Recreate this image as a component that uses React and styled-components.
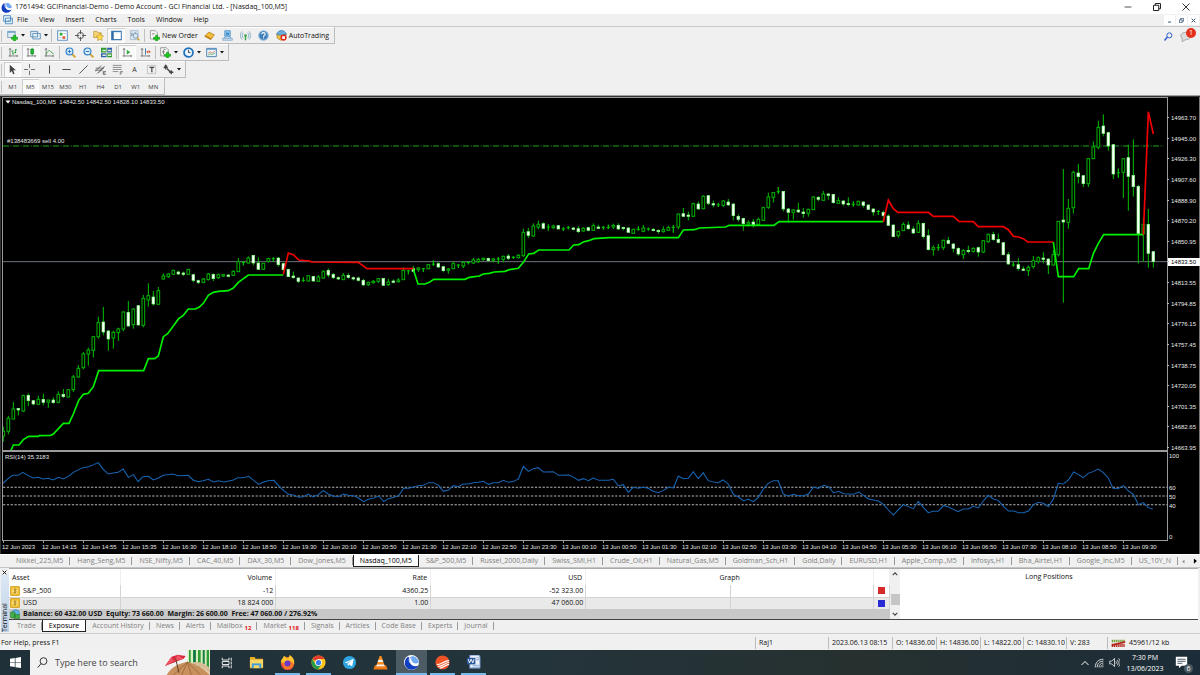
import React, { useState } from 'react';
import styled, { createGlobalStyle, css } from 'styled-components';

const GlobalStyle = createGlobalStyle`
  * {
    box-sizing: border-box;
  }
  body {
    margin: 0;
    background: #f0f0f0;
    font-family: 'Open Sans', 'Noto Sans', sans-serif;
    font-size: 7px;
    line-height: 10px;
    color: #111;
  }
  button, input {
    margin: 0;
    padding: 0;
    border: 0;
    background: none;
    color: inherit;
    font: inherit;
  }
  svg {
    display: block;
  }
`;

// every candle is "high top bottom low kind": g = up, w = down, d = flat
const parseCandles = (text, base) =>
  text.split(',').map(item => {
    const [high, top, bottom, low, kind] = item.trim().split(' ');
    return { high: +high + base, top: +top + base, bottom: +bottom + base, low: +low + base, kind };
  });

const candles = [
  ...parseCandles(
    `1010 1024 1038 1055 g,978 985 1024 1033 g,936 957 987 987 g,954 955 960 976 w,914 917 963 966 g,910 916 932 948 w,
    930 932 942 946 w,917 928 943 943 g,911 928 937 946 w,930 930 936 953 g,922 930 938 941 w,904 913 937 940 g,
    897 913 920 924 w,897 899 921 922 g,855 861 899 906 g,825 835 861 863 g,786 792 833 838 g,773 780 792 827 g,
    738 740 781 803 g,680 698 740 746 g,651 696 726 736 w,720 723 747 782 w,722 727 744 776 g,713 717 728 753 g,
    664 666 717 724 g,633 667 708 710 w,655 657 704 716 g,645 647 705 706 w,615 625 706 712 g,580 617 630 650 g,
    603 621 642 647 w,591 602 643 644 g,550 558 567 569 g,550 552 560 564 g,539 541 553 555 g,542 546 552 555 w,
    545 549 552 558 w,537 538 553 555 g,552 554 571 577 w,569 572 577 582 w,564 567 577 580 g,549 552 569 571 g,
    550 553 566 573 w,551 554 563 567 g,552 554 558 561 g,553 555 559 562 w,541 544 556 558 g,504 515 545 546 g,
    514 516 519 526 d,499 504 519 521 g,495 496 519 526 w,502 519 538 540 w,519 520 538 540 g,503 506 514 518 g,
    502 505 507 515 d,502 504 524 530 w,518 521 539 545 w,536 538 560 561 w,545 558 563 566 w,562 564 574 579 w,
    562 570 572 576 d,555 557 573 574 g,558 559 573 575 w,555 561 574 576 g,540 545 564 566 g,535 541 555 562 w,
    549 553 563 567 w,559 563 566 570 w,549 556 569 570 g,550 556 562 566 w,560 563 566 571 w,560 564 571 574 w,
    567 571 585 586 w,575 577 584 588 g,570 574 578 581 g,564 566 574 579 g,564 565 586 588 w,566 576 584 588 g,
    568 573 577 580 w,564 570 575 578 g`,
    0
  ),
  ...parseCandles(
    `262 271 299 300 g,270 271 274 283 d,258 266 274 278 w,261 264 269 276 g,264 265 267 276 d,252 254 266 268 g,
    241 251 254 258 d,247 251 261 264 w,258 260 272 277 w,264 267 270 281 g,245 251 266 268 g,252 254 257 264 d,
    243 247 258 264 g,243 246 249 253 d,234 240 249 252 g,234 238 245 249 g,233 235 239 242 g,233 235 242 245 w,
    234 237 241 247 g,231 236 238 251 d,227 229 238 247 g,222 228 235 240 w,228 231 233 237 d,222 226 233 235 g,
    146 157 227 231 g,144 155 166 174 w,130 138 168 170 g,122 133 141 148 g,127 131 145 148 w,133 140 142 152 d,
    134 138 143 147 g,135 137 147 148 w,142 145 148 153 d,138 142 144 148 d,141 144 148 151 w,138 146 155 159 w,
    141 145 153 155 g,140 143 151 154 w,130 137 151 152 g,134 141 143 147 w,138 141 143 149 d,134 141 143 147 d,
    131 136 141 147 g,130 136 147 149 w,140 142 146 151 w,142 144 157 158 w,146 148 160 162 g,139 147 149 152 d,
    135 144 154 157 g,143 146 148 152 d,144 148 152 154 w,148 151 155 161 w,139 149 155 158 g,137 143 151 152 g,
    135 141 143 158 d,101 102 141 148 g,84 101 109 111 w,95 105 108 121 w,68 71 109 110 g,64 72 87 89 w,
    46 49 86 88 g,45 47 70 75 w,62 71 74 82 w,69 73 76 81 d,61 63 76 81 g,57 66 75 76 w,70 72 107 121 w,
    103 109 118 125 w,113 115 131 152 w,121 127 132 140 g,117 126 134 142 w,113 118 133 137 g,80 83 121 122 g,
    38 51 82 87 g,36 38 52 68 g,21 34 36 41 d,33 34 87 94 w,84 87 97 128 w,87 90 97 119 g,68 90 96 98 w`,
    270
  ),
  ...parseCandles(
    `354 366 371 383 w,356 358 370 380 g,319 321 359 360 g,318 322 328 334 w,303 312 331 333 g,309 312 316 329 w,
    312 313 338 341 w,322 332 340 342 g,330 333 342 347 w,322 340 343 349 w,334 342 344 350 d,332 334 345 346 g,
    333 336 346 353 w,343 345 358 360 w,355 357 366 377 w,360 362 367 375 d,362 367 377 393 w,372 378 406 408 w,
    404 405 440 442 w,422 424 437 443 g,397 403 422 423 g,394 405 416 420 w,409 417 429 432 w,391 401 427 429 g,
    398 400 440 446 w,418 437 479 481 w,466 473 479 497 g,462 472 474 482 d,449 451 473 480 g,441 451 460 463 w,
    460 462 475 487 w,472 475 492 497 w,477 482 494 507 g,467 481 485 490 w,472 475 484 488 g,470 473 486 500 w,
    450 452 486 489 g,431 433 455 458 g,425 433 449 452 w,431 448 457 460 w,456 458 494 496 w,486 494 522 524 w,
    516 523 527 530 d,504 524 536 542 w,529 537 540 543 w,526 532 542 558 g,498 512 530 536 g,499 503 514 521 g,
    487 504 508 520 w,505 507 525 552 w,480 494 525 527 g,393 394 494 500 g,237 390 396 638 w,327 355 397 416 g,
    242 247 353 371 g,222 249 260 280 w,255 257 281 291 w,204 206 281 291 g,154 171 206 207 g,92 112 172 178 g,
    73 108 130 139 w,125 128 168 182 w,162 164 252 267 w,236 246 251 263 d,205 206 247 324 g,164 203 259 362 w,
    148 256 290 320 w,285 289 431 521 w,385 403 431 515 g,357 403 490 533 w,483 485 515 533 w`,
    0
  )
];

const trendLines = [
  ['#00f000', '33,1081 40,1065 57,1065 70,1049 86,1039 115,1039 118,1037 152,1036 160,1032 190,1000 207,1000 220,972 236,931 250,913 265,910 280,890 296,842 431,842 445,806 464,806 475,798 490,740 503,731 536,686 549,677 565,657 586,657 597,652 610,640 625,616 640,607 655,604 685,602 700,594 715,577 745,555 850,555'],
  ['#f00000', '850,553 865,489 880,494 896,510 930,513 935,516 1075,517 1101,536 1240,536'],
  ['#00f000', '1240,538 1254,582 1275,582 1288,577 1301,568 1395,568 1408,562 1438,558 1450,552 1468,550 1483,546 1515,544 1528,539 1555,535 1570,517 1586,492 1601,490 1616,480 1707,480 1721,465 1736,464 1750,456 1766,452 1782,446 1828,443 2035,443 2050,420 2083,419 2098,414 2176,411 2188,406 2322,406 2337,395 2650,395'],
  ['#f00000', '2650,396 2665,330 2680,356 2694,367 2785,367 2800,379 2860,379 2877,394 2920,395 2935,410 3010,410 3025,419 3040,439 3055,441 3070,446 3083,456 3160,456'],
  ['#00f000', '3160,456 3175,560 3221,560 3236,536 3266,536 3280,491 3295,460 3311,434 3430,434'],
  ['#f00000', '3430,434 3445,65 3460,132']
];

const rsiFirst =
  '8,115 25,97 34,91 48,91 60,82 74,92 87,99 100,97 113,102 127,100 139,105 153,97 166,102 179,94 192,82 206,74 217,68 232,65 245,59 257,53 270,73 283,87 296,84 309,82 322,72 336,97 349,89 361,110 374,95 388,94 401,105 414,99 427,91 452,87 466,92 492,91 505,105 518,110 531,107 545,103 558,111 571,107 585,111 598,108 610,105 622,98 637,98 650,94 662,105 676,118 689,111 701,107 716,106 728,122 741,136 754,148 767,150 782,157 793,155 806,147 819,156 832,149 845,137 858,147 871,153 884,155 898,147 911,151 924,152 937,159 950,170 963,163 975,160 990,153 1003,170 1015,161 1030,157 1042,152 1055,130 1068,130 1081,126 1094,122 1107,121 1120,113 1133,113 1146,121 1159,139 1172,135 1185,122 1198,125 1211,117 1224,117 1237,113 1250,112 1263,109 1277,118 1290,113 1303,113 1316,106 1329,112 1343,109 1355,102 1368,64 1381,79 1394,71 1407,68 1420,81 1446,80 1460,91 1487,90 1500,97 1512,106 1525,101 1538,107 1550,99 1568,107';
const rsiSecond =
  '0,106 22,106 35,103 48,122 61,119 74,142 87,127 100,130 113,127 126,130 139,139 153,143 166,136 179,127 192,129 205,93 218,101 231,100 244,80 257,101 270,83 283,107 308,114 322,105 335,117 349,148 362,156 375,167 388,163 401,170 414,157 427,132 440,115 453,107 466,107 479,147 492,153 506,148 519,152 532,152 545,147 558,126 571,130 585,121 598,126 611,144 624,139 637,146 662,148 676,141 689,151 702,162 728,168 741,178 754,195 767,210 780,194 793,179 806,185 819,191 832,169 845,187 858,203 871,199 884,199 898,182 911,186 936,200 949,192 963,192 976,184 989,189 1002,168 1015,151 1028,162 1041,166 1055,185 1068,198 1081,198 1094,203 1107,203 1120,198 1133,179 1146,172 1159,175 1172,185 1185,162 1198,115 1211,117 1225,104 1238,81 1250,88 1263,98 1276,85 1289,80 1302,72 1315,82 1328,98 1341,130 1354,131 1368,122 1381,138 1394,148 1407,179 1420,173 1433,188 1445,192';

const prices = ['14963.70', '14945.00', '14926.30', '14907.60', '14888.90', '14870.20', '14850.95', '14833.50', '14813.55', '14794.85', '14776.15', '14757.45', '14738.75', '14720.05', '14701.35', '14682.65', '14663.95'];

const times = ['12 Jun 2023', '12 Jun 14:15', '12 Jun 14:55', '12 Jun 15:35', '12 Jun 16:30', '12 Jun 18:10', '12 Jun 18:50', '12 Jun 19:30', '12 Jun 20:10', '12 Jun 20:50', '12 Jun 21:30', '12 Jun 22:10', '12 Jun 22:50', '12 Jun 23:30', '13 Jun 00:10', '13 Jun 00:50', '13 Jun 01:30', '13 Jun 02:10', '13 Jun 02:50', '13 Jun 03:30', '13 Jun 04:10', '13 Jun 04:50', '13 Jun 05:30', '13 Jun 06:10', '13 Jun 06:50', '13 Jun 07:30', '13 Jun 08:10', '13 Jun 08:50', '13 Jun 09:30'];

const symbols = ['Nikkei_225,M5', 'Hang_Seng,M5', 'NSE_Nifty,M5', 'CAC_40,M5', 'DAX_30,M5', 'Dow_Jones,M5', 'Nasdaq_100,M5', 'S&P_500,M5', 'Russel_2000,Daily', 'Swiss_SMI,H1', 'Crude_Oil,H1', 'Natural_Gas,M5', 'Goldman_Sch,H1', 'Gold,Daily', 'EURUSD,H1', 'Apple_Comp.,M5', 'Infosys,H1', 'Bha_Airtel,H1', 'Google_Inc,M5', 'US_10Y_N'];

const terminalTabs = [['Trade'], ['Exposure'], ['Account History'], ['News'], ['Alerts'], ['Mailbox', 12], ['Market', 118], ['Signals'], ['Articles'], ['Code Base'], ['Experts'], ['Journal']];

const plus = <path d="M9.500 7.500h3v3h3v3h-3v3h-3v-3h-3v-3h3z" fill="#18c818" stroke="#0a7d0a" strokeWidth=".7" />;
const axes = <path d="M3 2v12M1 13h13M1.500 4 3 2l1.500 2M12.500 11.500 14 13l-1.500 1.500" fill="none" stroke="#555" />;

const icons = {
  newChart: <><path d="M1 2h11v9H1z" fill="#dcecf7" stroke="#5c88ad" /><path d="M1 2h11v2H1z" fill="#6d9cc4" />{plus}</>,
  profiles: <path d="M1 2h10v8H1zM4 5h11v8H4z" fill="#e4eff8" stroke="#5487b4" strokeWidth="1.200" />,
  market: <><path d="M1 1h14v14H1z" fill="#fff" stroke="#5f94c4" strokeWidth="1.500" /><path d="M4 4h4v4H4z" fill="#2eaa3a" /><path d="M8 9h4v4H8z" fill="#e0603a" /><path d="M9 5h4M3 11h4" stroke="#9fb6ca" /></>,
  target: <><circle cx="8" cy="8" r="4.500" fill="none" stroke="#555" strokeWidth="1.400" /><path d="M8 0v6M8 10v6M0 8h6M10 8h6" stroke="#555" strokeWidth="1.400" /></>,
  navigator: <><path d="M1 2h5l1 2h5v7H1z" fill="#f5d573" stroke="#b98e26" /><path d="m10 5 1.700 3.300 3.800.5-2.800 2.700.7 3.900-3.400-1.800-3.400 1.800.7-3.900-2.800-2.700 3.800-.5z" fill="#ffdc4a" stroke="#b5861a" strokeWidth=".8" /></>,
  terminal: <><path d="M1 2h14v12H1z" fill="#fff" stroke="#3f7cb5" strokeWidth="1.500" /><path d="M1 2h3v12H1z" fill="#2f6ca8" /><path d="M5 4h9" stroke="#bcd2e6" /></>,
  tester: <><path d="M2 1h11v13H2z" fill="#dfe9f2" stroke="#8fa9c0" /><path d="M4 9V4M6 8V5M9 7V3" stroke="#55728d" /><circle cx="9.500" cy="8.500" r="3.500" fill="#d6e8f5" stroke="#7790a6" strokeWidth="1.200" /><path d="m12 11 3 4" stroke="#d5a02a" strokeWidth="2" /></>,
  order: <><path d="M2 1h7l3 3v9H2z" fill="#fff" stroke="#777" /><path d="M4 5h5M4 7h3" stroke="#888" />{plus}</>,
  book: <><path d="m1 9 6-6 8 4-5 7z" fill="#f2bd3a" stroke="#a8721a" /><path d="m1 9 9 5v-2L2 8z" fill="#b67a1a" /></>,
  people: <><path d="M4 1h8v8H4z" fill="#8cc3ec" stroke="#3d83ba" /><path d="M6 4h4v3H6z" fill="#3a86c8" /><path d="M3 12c0-4 10-4 10 0z" fill="#d3e9fa" stroke="#3d83ba" /><path d="M1 12h14v3H1z" fill="#c6dbee" stroke="#7fa5c6" /></>,
  signal: <><circle cx="8" cy="8" r="2" fill="#3aa244" /><path d="M5 4a5.500 5.500 0 0 0 0 8M11 4a5.500 5.500 0 0 1 0 8M3 2a8.500 8.500 0 0 0 0 12M13 2a8.500 8.500 0 0 1 0 12" fill="none" stroke="#82aec4" strokeWidth="1.300" /><path d="M8 9v6" stroke="#3aa244" strokeWidth="2" /></>,
  help: <><circle cx="8" cy="8" r="7" fill="#3e7fbb" stroke="#9fc1de" strokeWidth="1.500" /><path d="M5.500 6c0-3 5-3 5 0 0 2-2.500 1.800-2.500 4M8 11v1.500" fill="none" stroke="#fff" strokeWidth="1.600" /></>,
  auto: <><path d="M1 6h14l-2 6-6 3-5-3z" fill="#f2c040" stroke="#a87a1c" /><path d="M1 6c2-7 12-7 14 0-4 2-10 2-14 0z" fill="#6aaede" stroke="#3577a8" /><circle cx="11" cy="11" r="4.500" fill="#e02818" /><path d="M9 9h4v4H9z" fill="#fff" /></>,
  bars: <>{axes}<path d="M7 5v6M5 6h2M7 10h2M11 3v6M11 4h2M9 8h2" stroke="#1d9430" strokeWidth="1.200" /></>,
  candle: <>{axes}<path d="M9 1v12" stroke="#118a22" /><path d="M7 3h4v7H7z" fill="#24b536" stroke="#118a22" /></>,
  line: <>{axes}<path d="M3 11c2-5 5-8 7-4l4 3" fill="none" stroke="#35a245" strokeWidth="1.300" /></>,
  zoomIn: <><path d="m10 10 5 5" stroke="#d6a636" strokeWidth="3" /><circle cx="6.500" cy="6.500" r="5" fill="#d8edfb" stroke="#2d7fc4" strokeWidth="1.600" /><path d="M4 6.500h5M6.500 4v5" stroke="#2470b5" strokeWidth="1.400" /></>,
  zoomOut: <><path d="m10 10 5 5" stroke="#d6a636" strokeWidth="3" /><circle cx="6.500" cy="6.500" r="5" fill="#d8edfb" stroke="#2d7fc4" strokeWidth="1.600" /><path d="M4 6.500h5" stroke="#2470b5" strokeWidth="1.400" /></>,
  tile: <><path d="M0 1h8v7H0zM9 9h7v6H9z" fill="#2f9b2f" /><path d="M9 1h7v7H9zM0 9h8v6H0z" fill="#2c5fa8" /><path d="M2 4h5v2H2zM10 4h5v2h-5zM2 11h5v2H2zM10 11h5v2h-5z" fill="#e3efd8" /></>,
  scroll: <>{axes}<path d="m7 4 5 3.500L7 11z" fill="#2aa83a" /></>,
  shift: <>{axes}<path d="M8 2v9" stroke="#336da3" strokeWidth="1.300" /><path d="M14 5.500v3M10 7h5M12 5l-2 2 2 2" stroke="#d45028" strokeWidth="1.300" fill="none" /></>,
  indicators: <><path d="M1 1h8l3 3v9H1z" fill="#f8f8f8" stroke="#777" /><path d="M5 11V5c0-2 3-2 3-1M3 7h4" fill="none" stroke="#555" />{plus}</>,
  clock: <><circle cx="8" cy="8" r="6.500" fill="#e7f3fd" stroke="#2072b8" strokeWidth="2.500" /><path d="M8 4v4h3" stroke="#333" fill="none" strokeWidth="1.200" /></>,
  template: <><path d="M1 2h14v12H1z" fill="#edf5fb" stroke="#4d82b0" strokeWidth="1.400" /><path d="M1 2h14v2H1z" fill="#5e96c5" /><path d="m3 9 3-2 3 2 4-3" fill="none" stroke="#ce5535" /><path d="m3 12 3-2 3 1 4-2" fill="none" stroke="#35a245" /></>,
  cursor: <path d="m4 1 9 8H9l2 5-2 1-2-5-3 3z" fill="#444" />,
  cross: <path d="M8 0v6M8 10v6M0 8h6M10 8h6" stroke="#555" strokeWidth="1.200" />,
  vline: <path d="M8 2v12" stroke="#444" strokeWidth="1.400" />,
  hline: <path d="M2 8h12" stroke="#444" strokeWidth="1.400" />,
  slope: <path d="M2 14 14 2" stroke="#555" strokeWidth="1.400" />,
  channel: <path d="m0 11 9-9M3 14 14 3M1 6h12M0 9h11M5 13l8-8M12 11h4M12 13h3M12 15h4M12 11v4" stroke="#444" fill="none" />,
  fibo: <path d="M1 2h13M1 5h13M1 8h13M1 11h8M12 11h4M12 13h3M12 11v5" stroke="#666" fill="none" />,
  label: <><path d="M2 2h12v12H2z" fill="none" stroke="#777" strokeDasharray="1.500 1.500" /><path d="M5 5h7M8.500 5v7" stroke="#444" strokeWidth="1.800" /></>,
  arrows: <path d="M1 5h6M4 2v6M2.500 4 4 2l1.500 2M6 7l5 5M12 9v6M9 12h6" fill="none" stroke="#444" strokeWidth="2" />,
  swirl: <><circle cx="8" cy="8" r="8" fill="#fff" /><path d="M4 2c-5 4-4 12 2 13.500 4 1 8-1 9.500-4.500-6 3-11-2-8.500-9z" fill="#123fc0" /><path d="M8 1c-2 6 3 10 8 7-1-4-4-7-8-7z" fill="#6fa9f4" /><path d="M6 2c-2 6 3 11 9 8" fill="none" stroke="#fff" /></>,
  childWindow: <><path d="M1 1h11v9H1zM4 5h11v9H4z" fill="#e7f1fa" stroke="#3e80bb" strokeWidth="1.300" /><path d="m6 11 2-2 2 1 3-3" fill="none" stroke="#3e80bb" /></>,
  search: <><circle cx="9.500" cy="6" r="4.500" fill="none" stroke="#2a5bd0" strokeWidth="1.700" /><path d="m6 9-5 6" stroke="#2a5bd0" strokeWidth="2.500" /></>,
  coin: <><rect x=".5" y=".5" width="15" height="15" rx="2" fill="#f0bd2c" stroke="#b88715" /><circle cx="8" cy="8" r="5" fill="#f9dc71" /><path d="M10.500 5.500C8 4 5 6 7.500 7.500c4 1 3 4-2 3M8 3.500v9" fill="none" stroke="#9b6d0e" strokeWidth="1.100" /></>,
  cash: <><circle cx="9" cy="7" r="6" fill="#63b2e4" stroke="#2c77aa" /><path d="M1 5h7v9H1zM7 9h8v6H7z" fill="#47b24a" stroke="#1b7522" /></>,
  traffic: <><path d="M1 3h21" stroke="#6d9b2e" strokeWidth="4" strokeDasharray="2 1" /><path d="M1 10h21" stroke="#b5251b" strokeWidth="5" strokeDasharray="2 1" /><path d="M1 8 22 3v3L1 11z" fill="#b5251b" /></>
};

const taskIcons = {
  taskView: <path d="M3 1v3h9V1M3 15v-3h9v3M3 6h9v4H3zM15 1v4M15 6v4M15 11v4" fill="none" stroke="#e8eaec" strokeWidth="1.300" />,
  folder: <><path d="M1 2h5l1 2h8v10H1z" fill="#e9ae28" /><path d="M1 5h14v8H1z" fill="#fbd667" /><path d="M3 9h10v5H3z" fill="#3d9be0" /><path d="M5 11h6v3H5z" fill="#fbd667" /></>,
  firefox: <><circle cx="8" cy="9" r="7" fill="#ff7a22" /><path d="M1 8C1 4 4 3 4 1c2 0 3 2 3 3 3-1 3-3 3-4 4 2 6 6 5 10-3-5-8-5-10-2z" fill="#ffc42e" /><path d="M1 8c0 9 12 10 14 2-1 7-9 8-11 3z" fill="#e62f55" /><circle cx="8" cy="9" r="3.200" fill="#6937c9" /></>,
  chrome: <><circle cx="8" cy="8" r="7.500" fill="#fbc51c" /><path d="M8 8 1.500 4.300A7.500 7.500 0 0 1 14.500 4.300H8z" fill="#e23b2e" /><path d="M1.500 4.300A7.500 7.500 0 0 0 7.500 15.500L11 10 5 10z" fill="#279b48" /><circle cx="8" cy="8" r="3.600" fill="#fff" /><circle cx="8" cy="8" r="2.800" fill="#3b7ded" /></>,
  telegram: <><circle cx="8" cy="8" r="7" fill="#2da4df" /><path d="m3 8 9.500-4-1.700 8.300-3-2.100-1.500 1.600-.3-2.500 4-3.800-5 3.200z" fill="#fff" /></>,
  vlc: <><path d="M2 11h12l1.500 4.500H.5z" fill="#ef7a15" /><path d="M7 1h2l4 12H3z" fill="#f58a1f" /><path d="M6 5h4l1 2.500H5zM4.200 10h7.600l.7 2H3.500z" fill="#f1f1f1" /></>,
  swirl: icons.swirl,
  brick: <><circle cx="8" cy="8" r="7.500" fill="#ee5327" /><path d="M2 10c5 1 7-4 13-4M3 12c5 1 7-4 12-4M5 14c4 0 6-4 10-4" fill="none" stroke="#fff" strokeWidth="1.200" /></>,
  word: <><path d="M4 0h10l1 2v12H4z" fill="#e9f0fa" stroke="#5b83bd" /><path d="M7 11h7M7 13h7M11 3h3M11 5h3" stroke="#87a6d2" /><path d="M1 3h9v7H1z" fill="#2b579a" /><path d="m2.500 4.500 1.200 4 1.800-4 1.700 4 1.300-4" fill="none" stroke="#fff" /></>
};

const Icon = ({ art, size = 11, box = '0 0 16 16', width }) => (
  <svg width={width || size} height={size} viewBox={box} aria-hidden="true">
    {art}
  </svg>
);

const Caret = () => (
  <svg width="4" height="3" viewBox="0 0 4 3" aria-hidden="true">
    <path d="M0 0h4L2 2.500z" fill="#111" />
  </svg>
);

const Tool = ({ name, pressed, menu }) => (
  <ToolButton aria-label={name} $pressed={pressed} $menu={menu}>
    <Icon art={icons[name]} />
    {menu ? <Caret /> : <></>}
  </ToolButton>
);

const WindowHeader = () => (
  <header>
    <TitleBar>
      <Icon art={icons.swirl} />
      <Title>1761494: GCIFinancial-Demo - Demo Account - GCI Financial Ltd. - [Nasdaq_100,M5]</Title>
      <WindowButton aria-label="Minimize"><Icon size={8} art={<path d="M1 8h14" stroke="#222" strokeWidth="1.500" />} /></WindowButton>
      <WindowButton aria-label="Restore"><Icon size={8} art={<path d="M1 4.500h10.500V15H1zM4.500 4.500V1H15v10.500h-3.500" fill="none" stroke="#222" strokeWidth="2" />} /></WindowButton>
      <WindowButton aria-label="Close"><Icon size={8} art={<path d="m1 1 14 14M15 1 1 15" stroke="#222" strokeWidth="1.800" />} /></WindowButton>
    </TitleBar>
    <MenuBar>
      <Icon size={10} art={icons.childWindow} />
      <MenuList>
        {['File', 'View', 'Insert', 'Charts', 'Tools', 'Window', 'Help'].map(item => (
          <MenuButton key={item}>{item}</MenuButton>
        ))}
      </MenuList>
      <ChildButton aria-label="Minimize chart"><Icon size={5} art={<path d="M3 13h10" stroke="#31506f" strokeWidth="3" />} /></ChildButton>
      <ChildButton aria-label="Restore chart"><Icon size={5} art={<path d="M1 6h9v9H1zM5 5V1h10v9h-4" fill="none" stroke="#31506f" strokeWidth="2.500" />} /></ChildButton>
      <ChildButton aria-label="Close chart"><Icon size={5} art={<path d="m2 2 12 12M14 2 2 14" stroke="#31506f" strokeWidth="3" />} /></ChildButton>
    </MenuBar>
  </header>
);

const Toolbars = () => (
  <ToolbarArea>
    <ToolbarStack>
      <Toolbar>
        <Tool name="newChart" menu />
        <Tool name="profiles" menu />
        <Separator />
        <Tool name="market" />
        <Tool name="target" />
        <Tool name="navigator" />
        <Tool name="terminal" pressed />
        <Tool name="tester" />
        <Separator />
        <WideButton><Icon art={icons.order} />New Order</WideButton>
        <Tool name="book" />
        <Tool name="people" />
        <Tool name="signal" />
        <Tool name="help" />
        <WideButton><Icon art={icons.auto} />AutoTrading</WideButton>
      </Toolbar>
      <Toolbar>
        <Tool name="bars" />
        <Tool name="candle" pressed />
        <Tool name="line" />
        <Separator />
        <Tool name="zoomIn" />
        <Tool name="zoomOut" />
        <Tool name="tile" />
        <Separator />
        <Tool name="scroll" pressed />
        <Tool name="shift" />
        <Separator />
        <Tool name="indicators" menu />
        <Tool name="clock" menu />
        <Tool name="template" menu />
      </Toolbar>
      <DrawToolbar>
        <Tool name="cursor" pressed />
        <Tool name="cross" />
        <Separator $hidden />
        <Tool name="vline" />
        <Tool name="hline" />
        <Tool name="slope" />
        <Tool name="channel" />
        <Tool name="fibo" />
        <ToolButton>A</ToolButton>
        <Tool name="label" />
        <Tool name="arrows" menu />
      </DrawToolbar>
      <Toolbar>
        <Periods>
          {['M1', 'M5', 'M15', 'M30', 'H1', 'H4', 'D1', 'W1', 'MN'].map(period => (
            <PeriodButton key={period} $pressed={period === 'M5'}>{period}</PeriodButton>
          ))}
        </Periods>
      </Toolbar>
    </ToolbarStack>
    <HeaderTools>
      <button aria-label="Search"><Icon size={9} art={icons.search} /></button>
      <BalloonButton>
        <Icon size={12} art={<path d="M1 8c0-6 12-7 13 0 0 4-4 5-7 5l-4 3V12z" fill="#ddd" stroke="#9a9a9a" />} />
        <RedBadge>1</RedBadge>
      </BalloonButton>
    </HeaderTools>
  </ToolbarArea>
);

const Candle = ({ candle, index }) => {
  const x = 10 + index * 15;
  const { high, top, bottom, low, kind } = candle;
  const flat = kind === 'd';
  return (
    <g>
      <path d={`M${x} ${high}V${top}M${x} ${bottom}V${low}`} stroke="#00c000" strokeWidth="3" />
      {flat ? (
        <path d={`M${x} ${high}V${low}M${x - 5} ${(top + bottom) / 2}h10`} stroke="#00c000" strokeWidth="3" />
      ) : (
        <rect
          x={x - 4}
          y={top}
          width="8"
          height={Math.max(bottom - top, 4)}
          fill={kind === 'w' ? '#fff' : '#000'}
          stroke={kind === 'w' ? '#7dff7d' : '#00b400'}
          strokeWidth={kind === 'w' ? 2 : 3}
        />
      )}
    </g>
  );
};

const Chart = () => (
  <ChartWindow>
    <Pane>
      <PlotSvg viewBox="9 24 3492 1056" preserveAspectRatio="none">
        <path d="M9 168H3490" stroke="#146e14" strokeWidth="5" strokeDasharray="18 5 3 4" />
        <path d="M9 515H3501" stroke="#6c757d" strokeWidth="3" />
        {candles.map((candle, index) => (
          <Candle key={index} candle={candle} index={index} />
        ))}
        {trendLines.map(([color, points]) => (
          <polyline key={points} points={points} fill="none" stroke={color} strokeWidth="5" />
        ))}
      </PlotSvg>
      <PaneTitle>
        <Icon size={6} art={<path d="M1 4h14l-7 8z" fill="#fff" />} />
        Nasdaq_100,M5&nbsp; 14842.50 14842.50 14828.10 14833.50
      </PaneTitle>
      <OrderLabel>#138483669 sell 4.00</OrderLabel>
    </Pane>
    <PriceAxis>
      {prices.map(price => (
        <Price key={price} $current={price === '14833.50'}>{price}</Price>
      ))}
    </PriceAxis>
    <Pane $last>
      <PlotSvg viewBox="8 21 3042 264" preserveAspectRatio="none">
        <path d="M8 127H3050M8 153H3050M8 179H3050" stroke="#b4b4b4" strokeWidth="3" strokeDasharray="6 4" fill="none" />
        <polyline points={rsiFirst} fill="none" stroke="#1763b0" strokeWidth="3" />
        <polyline points={rsiSecond} transform="translate(1568 0)" fill="none" stroke="#1763b0" strokeWidth="3" />
      </PlotSvg>
      <RsiTitle>RSI(14) 35.3183</RsiTitle>
    </Pane>
    <RsiAxis>
      <span>100</span>
      <RsiLevels>
        <span>60</span>
        <span>50</span>
        <span>40</span>
      </RsiLevels>
      <span>0</span>
    </RsiAxis>
    <TimeAxis>
      {times.map(time => (
        <Time key={time}>{time}</Time>
      ))}
    </TimeAxis>
  </ChartWindow>
);

const SymbolTabs = () => {
  const [active, setActive] = useState('Nasdaq_100,M5');
  return (
    <SymbolBar>
      <SymbolList>
        {symbols.map(symbol => (
          <Tab key={symbol} $active={symbol === active} onClick={() => setActive(symbol)}>{symbol}</Tab>
        ))}
      </SymbolList>
      <ScrollButton aria-label="Scroll left"><Icon size={5} art={<path d="M11 2v12L4 8z" fill="#888" />} /></ScrollButton>
      <ScrollButton aria-label="Scroll right"><Icon size={6} art={<path d="M5 1v14l8-7z" fill="#000" />} /></ScrollButton>
    </SymbolBar>
  );
};

const Terminal = () => {
  const [active, setActive] = useState('Exposure');
  return (
    <TerminalPanel>
      <TerminalSide>
        <button aria-label="Close terminal"><Icon size={5} art={<path d="m2 2 12 12M14 2 2 14" stroke="#111" strokeWidth="3" />} /></button>
        <SideLabel>Terminal</SideLabel>
      </TerminalSide>
      <TerminalMain>
        <TerminalContent>
          <Assets>
            <colgroup>
              <Col $width="12.7%" />
              <Col $width="17.6%" />
              <Col $width="17.6%" />
              <Col $width="17.6%" />
              <Col $width="16.4%" />
              <Col $width="16.3%" />
              <Col $width="1.8%" />
            </colgroup>
            <thead>
              <tr>
                <th>Asset</th>
                <th>Volume</th>
                <th>Rate</th>
                <th>USD</th>
                <GraphHead colSpan={2}>Graph</GraphHead>
                <th />
              </tr>
            </thead>
            <tbody>
              <AssetRow>
                <td><AssetName><Icon size={10} art={icons.coin} />S&amp;P_500</AssetName></td>
                <td>-12</td>
                <td>4360.25</td>
                <td>-52 323.00</td>
                <td />
                <td />
                <td><Swatch $color="#d62b2b" /></td>
              </AssetRow>
              <AssetRow $shaded>
                <td><AssetName><Icon size={10} art={icons.coin} />USD</AssetName></td>
                <td>18 824 000</td>
                <td>1.00</td>
                <td>47 060.00</td>
                <td />
                <td />
                <td><Swatch $color="#2b2bd6" /></td>
              </AssetRow>
            </tbody>
          </Assets>
          <Balance>
            <Icon size={10} art={icons.cash} />
            Balance: 60 432.00 USD&nbsp; Equity: 73 660.00&nbsp; Margin: 26 600.00&nbsp; Free: 47 060.00 / 276.92%
          </Balance>
          <ScrollTrack>
            <Icon size={6} art={<path d="m2 11 6-6 6 6" fill="none" stroke="#444" strokeWidth="3" />} />
            <ScrollThumb />
            <Icon size={6} art={<path d="m2 5 6 6 6-6" fill="none" stroke="#444" strokeWidth="3" />} />
          </ScrollTrack>
          <Positions>Long Positions</Positions>
        </TerminalContent>
        <TerminalTabs>
          {terminalTabs.map(([name, count]) => (
            <Tab key={name} $narrow $active={name === active} onClick={() => setActive(name)}>
              {name}
              {count ? <Count>{count}</Count> : <></>}
            </Tab>
          ))}
        </TerminalTabs>
      </TerminalMain>
    </TerminalPanel>
  );
};

const Status = () => (
  <StatusBar>
    <HelpText>For Help, press F1</HelpText>
    <StatusCell $width={73}>Raj1</StatusCell>
    <StatusCell $width={64}>2023.06.13 08:15</StatusCell>
    <StatusCell $width={44}>O: 14836.00</StatusCell>
    <StatusCell $width={44}>H: 14836.00</StatusCell>
    <StatusCell $width={43}>L: 14822.00</StatusCell>
    <StatusCell $width={43}>C: 14830.10</StatusCell>
    <StatusCell $width={41}>V: 283</StatusCell>
    <StatusCell $width={93}>
      <Icon size={9} width={15} box="0 0 23 14" art={icons.traffic} />
      45961/12 kb
    </StatusCell>
  </StatusBar>
);

const Taskbar = () => (
  <TaskbarRow>
    <StartButton aria-label="Start">
      <Icon size={11} art={<path d="M0 2.500 7 1.500v6H0zM8 1.300 16 0v7.500H8zM0 8.500h7v6l-7-1zM8 8.500h8V16l-8-1.200z" fill="#fff" />} />
    </StartButton>
    <SearchBox>
      <Icon size={11} art={<><circle cx="9.500" cy="6" r="5" fill="none" stroke="#222" strokeWidth="1.300" /><path d="m6 9.500-5 6" stroke="#222" strokeWidth="1.300" /></>} />
      <SearchInput aria-label="Search" placeholder="Type here to search" />
      <svg width="45" height="25" viewBox="0 0 135 75" aria-hidden="true">
        <path d="M68 0h66v50H68z" fill="#d8efc0" />
        <path d="M72 0h5v42h-5zM84 0h9v44h-9zM99 0h8v50h-8zM113 0h6v46h-6zM125 0h7v60h-7z" fill="#2f9b34" />
        <path d="M86 0h5v44h-5zM115 0h3v46h-3z" fill="#0f6b5a" />
        <path d="M5 75c14-24 30-32 62-40 24 6 48 18 68 40z" fill="#c8905c" />
        <path d="m67 36-42 39M67 36 50 75M67 36l12 39M67 36l40 39" stroke="#8a5a34" strokeWidth="2" />
        <path d="M80 40c10-8 40-4 55 16v16c-20-18-38-26-55-32z" fill="#d9bd98" />
        <path d="M0 48 20 20l18-6 24 4-6 8z" fill="#d7283d" />
        <path d="M20 20 0 48l26-14zM38 14 26 34l30-8z" fill="#ef5262" />
        <path d="m32 26 10 42" stroke="#5c3822" strokeWidth="3" />
      </svg>
    </SearchBox>
    {Object.keys(taskIcons).map(name => (
      <TaskButton
        key={name}
        aria-label={name}
        $open={['firefox', 'chrome', 'swirl', 'brick', 'word'].includes(name)}
        $active={name === 'swirl'}
      >
        <Icon size={name === 'taskView' ? 12 : 15} art={taskIcons[name]} />
      </TaskButton>
    ))}
    <Tray>
      <Icon size={8} art={<path d="m1 12 7-7 7 7" fill="none" stroke="#fff" strokeWidth="2" />} />
      <Icon size={10} art={<path d="M2 15C2 7 7 2 15 2M5 15c0-6 4-10 10-10M8 15c0-4 3-7 7-7M11 15c0-2 2-4 4-4M13 15l2-2" fill="none" stroke="#e8eaec" strokeWidth="1.400" />} />
      <Icon size={11} art={<path d="M1 6h3l4-4v12l-4-4H1zM10 6c1 1 1 3 0 4M12 4c2 2 2 6 0 8M14 2c3 3 3 9 0 12" fill="none" stroke="#e8eaec" strokeWidth="1.200" />} />
      <Clock>
        <span>7:30 PM</span>
        <span>13/06/2023</span>
      </Clock>
      <Notifications>
        <Icon size={13} art={<><path d="M1 1h14v11H8l-3 3v-3H1z" fill="#fff" /><path d="M3 4h10M3 6.500h10M3 9h6" stroke="#253642" /></>} />
        <NotificationCount>6</NotificationCount>
      </Notifications>
    </Tray>
  </TaskbarRow>
);

const App = () => (
  <Desktop>
    <GlobalStyle />
    <WindowHeader />
    <Toolbars />
    <Chart />
    <SymbolTabs />
    <Terminal />
    <Status />
    <Taskbar />
  </Desktop>
);

const Desktop = styled.div`
  display: flex;
  flex-direction: column;
  height: 100vh;
  overflow: hidden;
`;

const TitleBar = styled.div`
  display: flex;
  align-items: center;
  height: 14px;
  padding-left: 1px;
  background: #fff;
`;

const Title = styled.h1`
  flex: 1;
  margin: 0 0 0 3px;
  font-size: 7px;
  font-weight: 400;
  white-space: nowrap;
`;

const WindowButton = styled.button`
  display: flex;
  align-items: center;
  justify-content: center;
  width: 29px;
  height: 13px;
`;

const MenuBar = styled.div`
  display: flex;
  align-items: center;
  height: 13px;
  padding-left: 3px;
  border-bottom: 1px solid #c8c8c8;
`;

const MenuList = styled.nav`
  display: flex;
  flex: 1;
  gap: 11px;
  margin-left: 4px;
`;

const MenuButton = styled.button`
  white-space: nowrap;
`;

const ChildButton = styled.button`
  display: flex;
  align-items: center;
  justify-content: center;
  width: 11px;
  height: 10px;
  margin-right: 1px;
  background: #fff;
`;

const ToolbarArea = styled.div`
  display: flex;
  justify-content: space-between;
`;

const ToolbarStack = styled.div`
  display: flex;
  flex-direction: column;
  align-items: flex-start;
`;

const Toolbar = styled.div`
  display: flex;
  align-items: center;
  height: 17px;
  padding: 1px 2px 0 1px;
  border: solid #bdbdbd;
  border-width: 0 1px 1px 0;
  box-shadow: inset 0 1px #fff;

  &::before {
    content: '';
    width: 2px;
    height: 12px;
    border-left: 1px solid #c4c4c4;
  }
`;

const pressedStyle = css`
  background: #f9f9f9;
  box-shadow: inset 1px 1px #cfcfcf, inset -1px -1px #fff;
`;

const ToolButton = styled.button`
  display: flex;
  align-items: center;
  justify-content: center;
  gap: 3px;
  width: ${({ $menu }) => ($menu ? 23 : 18)}px;
  height: 15px;
  color: #333;
  ${({ $pressed }) => $pressed && pressedStyle}
`;

const DrawToolbar = styled(Toolbar)`
  ${ToolButton}:not(:last-child) {
    width: 17px;
  }
`;

const WideButton = styled.button`
  display: flex;
  align-items: center;
  gap: 2px;
  padding: 0 3px;
  white-space: nowrap;
`;

const Separator = styled.span`
  width: 1px;
  height: 13px;
  margin: 0 1px;
  background: ${({ $hidden }) => ($hidden ? 'transparent' : '#c0c0c0')};
`;

const Periods = styled.div`
  display: grid;
  grid-template-columns: repeat(9, 1fr);
  width: 158px;
`;

const PeriodButton = styled.button`
  height: 15px;
  font-size: 6px;
  color: #444;
  ${({ $pressed }) => $pressed && pressedStyle}
`;

const HeaderTools = styled.div`
  display: flex;
  align-items: center;
  gap: 7px;
  height: 18px;
  padding-right: 8px;
`;

const BalloonButton = styled.button`
  position: relative;
`;

const RedBadge = styled.span`
  position: absolute;
  top: -2px;
  right: -4px;
  width: 10px;
  height: 10px;
  border-radius: 5px;
  background: #e2311d;
  color: #fff;
  text-align: center;
`;

const ChartWindow = styled.main`
  display: grid;
  flex: 1;
  grid-template-columns: minmax(0, 1fr) 32px;
  grid-template-rows: minmax(0, 355fr) minmax(0, 89fr) 13px;
  min-height: 0;
  padding: 1px 0 0 2px;
  border-top: 1px solid #a0a0a0;
  background: #000;
  box-shadow: inset 1px 1px #333, inset -1px 0 #777;
  color: #e8e8e8;
  font-family: 'Liberation Sans', sans-serif;
  font-size: 6px;
  line-height: 8px;
`;

const Pane = styled.section`
  position: relative;
  min-height: 0;
  border: 1px solid #9a9a9a;
  border-width: ${({ $last }) => ($last ? '0 1px 1px 1px' : '1px 1px 2px 1px')};
`;

const PlotSvg = styled.svg`
  width: 100%;
  height: 100%;
`;

const PaneTitle = styled.div`
  position: absolute;
  top: 0;
  left: 2px;
  display: flex;
  align-items: center;
  gap: 1px;
  white-space: nowrap;
`;

const OrderLabel = styled.div`
  position: absolute;
  top: 11%;
  left: 4px;
`;

const RsiTitle = styled.div`
  position: absolute;
  top: 1px;
  left: 2px;
`;

const PriceAxis = styled.div`
  display: flex;
  flex-direction: column;
  justify-content: space-between;
  padding-top: 17px;
`;

const Price = styled.span`
  position: relative;
  padding-left: 3px;
  background: ${({ $current }) => ($current ? '#fff' : 'transparent')};
  color: ${({ $current }) => ($current ? '#000' : '#e8e8e8')};

  &::before {
    content: '';
    position: absolute;
    top: 3px;
    left: -1px;
    width: 2px;
    height: 1px;
    background: #bbb;
  }
`;

const RsiAxis = styled.div`
  display: flex;
  flex-direction: column;
  justify-content: space-between;
  padding-left: 1px;
`;

const RsiLevels = styled.div`
  display: flex;
  flex-direction: column;
  gap: 1px;
`;

const TimeAxis = styled.div`
  display: flex;
  padding-right: 6px;
`;

const Time = styled.span`
  flex: 1 1 0;
  min-width: 0;
  padding-top: 2px;
  white-space: nowrap;
  background: linear-gradient(#9a9a9a, #9a9a9a) 1px 0 / 1px 2px no-repeat;
`;

const SymbolBar = styled.div`
  display: flex;
  align-items: flex-start;
  height: 14px;
  padding-left: 9px;
  border-top: 1px solid #fff;
  border-bottom: 1px solid #c4c4c4;
`;

const SymbolList = styled.div`
  display: flex;
  flex: 1;
  min-width: 0;
  overflow: hidden;
`;

const Tab = styled.button`
  position: relative;
  display: flex;
  flex: none;
  height: 12px;
  padding: 1px ${({ $narrow }) => ($narrow ? 6 : 7)}px 0;
  color: #808080;
  white-space: nowrap;

  &::after {
    content: '';
    position: absolute;
    top: 2px;
    right: 0;
    width: 1px;
    height: 8px;
    background: #999;
  }

  ${({ $active }) =>
    $active &&
    css`
      border: 1px solid #222;
      border-top: 0;
      padding: 1px 6px 0;
      background: #fff;
      color: #000;

      &::after {
        display: none;
      }
    `}
`;

const ScrollButton = styled.button`
  display: flex;
  align-items: center;
  justify-content: center;
  width: 11px;
  height: 12px;
`;

const TerminalPanel = styled.section`
  display: flex;
  height: 66px;
  border-bottom: 1px solid #ccc;
`;

const TerminalSide = styled.div`
  display: flex;
  flex-direction: column;
  align-items: center;
  width: 9px;
  padding-top: 2px;
`;

const SideLabel = styled.div`
  display: flex;
  flex: 1;
  width: 8px;
  line-height: 8px;
  margin-bottom: 1px;
  background: linear-gradient(#bdd0e4, #dbe8f5);
  writing-mode: vertical-rl;
  transform: rotate(180deg);
`;

const TerminalMain = styled.div`
  flex: 1;
  min-width: 0;
  padding-right: 2px;
`;

const TerminalContent = styled.div`
  display: grid;
  grid-template-columns: minmax(0, 881fr) 10px minmax(0, 298fr);
  grid-template-rows: 40px 10px;
  height: 52px;
  border-top: 1px solid #aaa;
  border-bottom: 1px solid #444;
  background: #fff;
`;

const Assets = styled.table`
  width: 100%;
  table-layout: fixed;
  border-collapse: collapse;

  th {
    height: 16px;
    padding: 1px 3px 0;
    border-right: 1px solid #eee;
    font-weight: 400;
    text-align: right;
  }
  th:first-child {
    text-align: left;
  }
`;

const Col = styled.col`
  width: ${({ $width }) => $width};
`;

const GraphHead = styled.th`
  && {
    text-align: center;
  }
`;

const AssetRow = styled.tr`
  height: 12px;
  background: ${({ $shaded }) => ($shaded ? '#e9e9e9' : '#fff')};

  td {
    height: 12px;
    padding: 0 2px 0 1px;
    border-right: 1px solid #d4d4d4;
    border-bottom: 1px solid #d4d4d4;
    text-align: right;
  }
`;

const AssetName = styled.div`
  display: flex;
  align-items: center;
  gap: 3px;
`;

const Swatch = styled.i`
  display: block;
  width: 7px;
  height: 7px;
  margin-left: 3px;
  background: ${({ $color }) => $color};
`;

const Balance = styled.div`
  display: flex;
  grid-row: 2;
  gap: 3px;
  padding-left: 1px;
  background: #c8c8c8;
  font-weight: 700;
  white-space: nowrap;
`;

const ScrollTrack = styled.div`
  display: flex;
  grid-column: 2;
  grid-row: 1 / 3;
  flex-direction: column;
  align-items: center;
  justify-content: space-between;
  padding: 2px 0;
  background: #f0f0f0;
`;

const ScrollThumb = styled.div`
  width: 9px;
  height: 11px;
  margin-top: 11px;
  background: #c6c6c6;
`;

const Positions = styled.div`
  grid-column: 3;
  grid-row: 1;
  padding-top: 3px;
  text-align: center;
`;

const TerminalTabs = styled.div`
  display: flex;
  padding-left: 2px;
`;

const Count = styled.sub`
  margin-left: 2px;
  padding-top: 3px;
  color: #e01818;
  font-size: 6px;
  font-weight: 700;
  line-height: 8px;
`;

const StatusBar = styled.footer`
  display: flex;
  align-items: center;
  height: 16px;
  padding-top: 2px;
`;

const HelpText = styled.span`
  flex: 1;
  padding-left: 1px;
`;

const StatusCell = styled.span`
  display: flex;
  align-items: center;
  gap: 3px;
  width: ${({ $width }) => $width}px;
  height: 12px;
  padding-left: 3px;
  border-left: 1px solid #bbb;
  white-space: nowrap;
`;

const TaskbarRow = styled.div`
  display: flex;
  height: 25px;
  background: linear-gradient(90deg, #203038, #24343b 45%, #26302f 72%, #1c2d39);
  color: #fff;
`;

const StartButton = styled.button`
  display: flex;
  align-items: center;
  justify-content: center;
  width: 30px;
`;

const SearchBox = styled.label`
  display: flex;
  align-items: center;
  width: 180px;
  padding-left: 7px;
  background: #f1f1f1;
`;

const SearchInput = styled.input`
  flex: 1;
  min-width: 0;
  height: 25px;
  padding-left: 7px;
  color: #333;
  font-size: 9px;

  &::placeholder {
    color: #444;
    opacity: 1;
  }
`;

const TaskButton = styled.button`
  position: relative;
  display: flex;
  align-items: center;
  justify-content: center;
  width: 31px;
  height: 25px;
  background: ${({ $active }) => ($active ? '#4d5c64' : 'transparent')};

  &::after {
    content: '';
    position: absolute;
    right: ${({ $active }) => ($active ? 0 : 3)}px;
    bottom: 0;
    left: ${({ $active }) => ($active ? 0 : 3)}px;
    height: 2px;
    background: ${({ $open }) => ($open ? '#76b9ed' : 'transparent')};
  }
`;

const Tray = styled.div`
  display: flex;
  align-items: center;
  gap: 5px;
  margin-left: auto;
  padding-right: 12px;
`;

const Clock = styled.div`
  display: flex;
  flex-direction: column;
  align-items: center;
  width: 40px;
  line-height: 11px;
`;

const Notifications = styled.button`
  position: relative;
  margin-left: 5px;
`;

const NotificationCount = styled.span`
  position: absolute;
  right: -5px;
  bottom: -4px;
  width: 9px;
  height: 9px;
  border-radius: 5px;
  background: #4b5963;
  line-height: 9px;
  text-align: center;
`;

export default App;
